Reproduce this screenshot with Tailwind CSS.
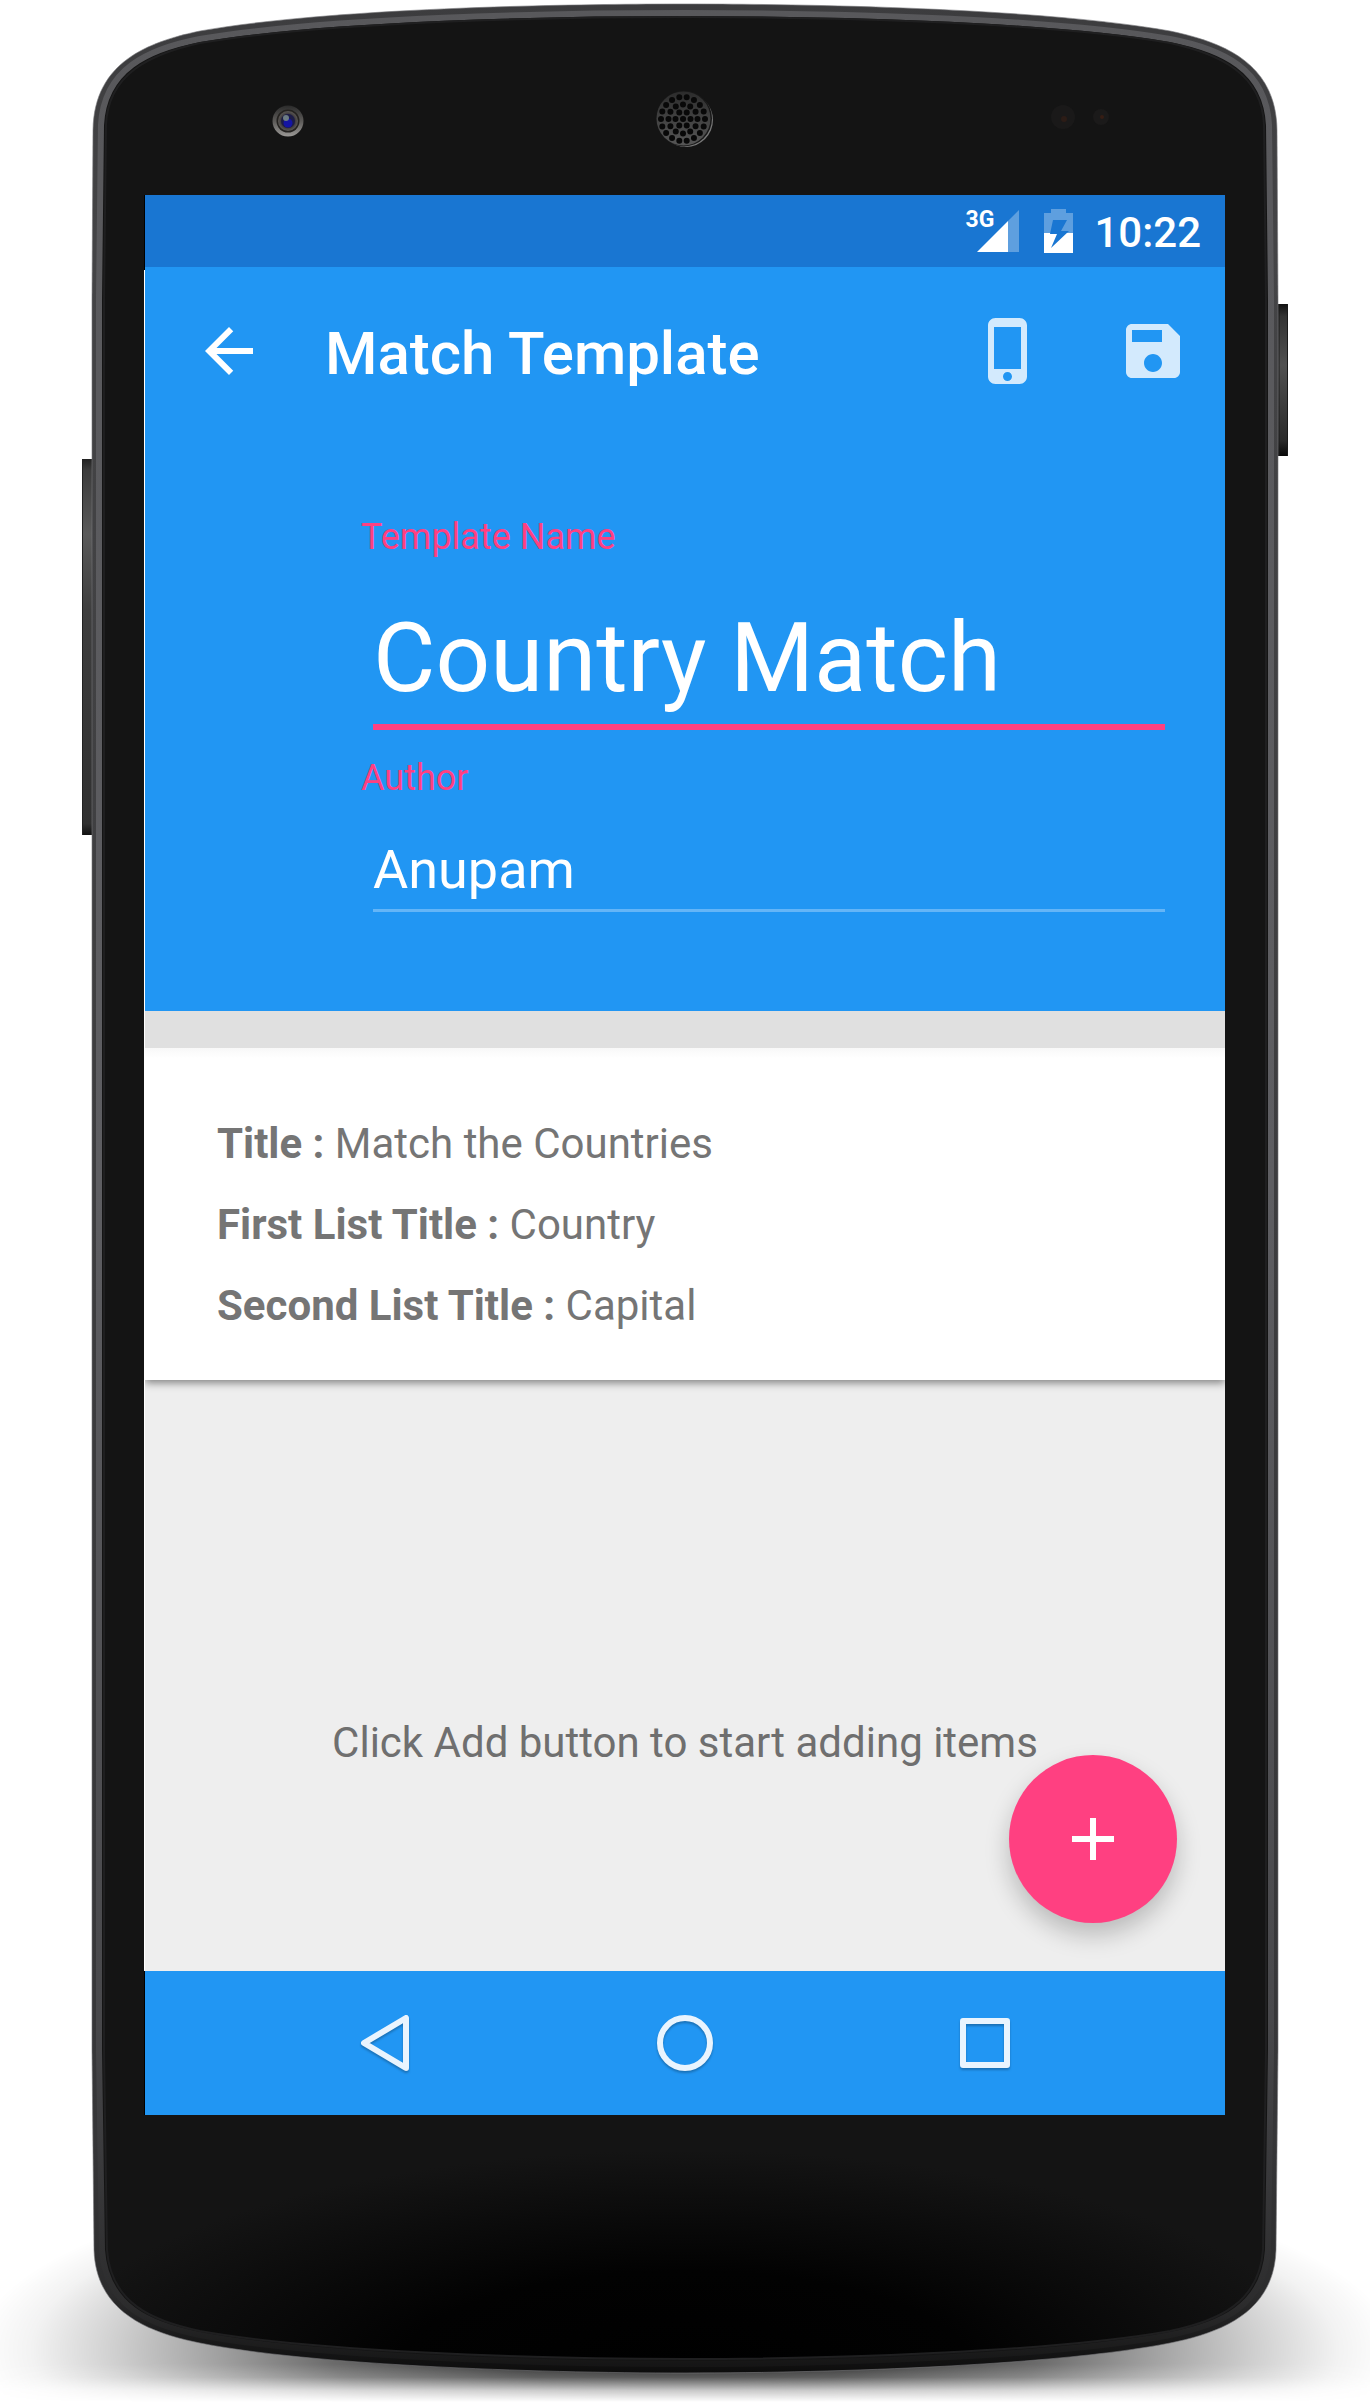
<!DOCTYPE html>
<html lang="en">
<head>
<meta charset="utf-8">
<meta name="viewport" content="width=device-width, initial-scale=1">
<title>Match Template</title>
<script src="https://cdn.jsdelivr.net/npm/@tailwindcss/browser@4"></script>
</head>
<body class="bg-white font-['Roboto',sans-serif]">
<div class="relative mx-auto w-full max-w-[1370px] px-[145px] pt-[195px] pb-[290px]">

  <!-- Device body -->
  <svg class="absolute inset-0 h-full w-full" viewBox="0 0 1370 2405" preserveAspectRatio="none" aria-hidden="true">
    <defs>
      <radialGradient id="ground" gradientUnits="userSpaceOnUse" cx="0" cy="0" r="1" gradientTransform="translate(685 2350) scale(710 200)">
        <stop offset="0" stop-color="#000" stop-opacity=".85"/>
        <stop offset=".25" stop-color="#000" stop-opacity=".78"/>
        <stop offset=".5" stop-color="#000" stop-opacity=".58"/>
        <stop offset=".65" stop-color="#000" stop-opacity=".38"/>
        <stop offset=".8" stop-color="#000" stop-opacity=".19"/>
        <stop offset=".92" stop-color="#000" stop-opacity=".05"/>
        <stop offset="1" stop-color="#000" stop-opacity="0"/>
      </radialGradient>
      <linearGradient id="fade" gradientUnits="userSpaceOnUse" x1="0" y1="2364" x2="0" y2="2402">
        <stop offset="0" stop-color="#fff"/>
        <stop offset=".35" stop-color="#ccc"/>
        <stop offset=".7" stop-color="#444"/>
        <stop offset="1" stop-color="#000"/>
      </linearGradient>
      <mask id="floor" maskUnits="userSpaceOnUse" x="0" y="2100" width="1370" height="305">
        <rect x="0" y="2100" width="1370" height="305" fill="url(#fade)"/>
      </mask>
      <linearGradient id="rim" gradientUnits="userSpaceOnUse" x1="0" y1="0" x2="0" y2="2375">
        <stop offset="0" stop-color="#3c3c3e"/>
        <stop offset=".1" stop-color="#444446"/>
        <stop offset=".9" stop-color="#363638"/>
        <stop offset=".965" stop-color="#2c2c2d"/>
        <stop offset="1" stop-color="#0c0c0c"/>
      </linearGradient>
      <linearGradient id="edge" gradientUnits="userSpaceOnUse" x1="0" y1="0" x2="0" y2="2375">
        <stop offset="0" stop-color="#58585b"/>
        <stop offset=".5" stop-color="#5e5e62"/>
        <stop offset=".85" stop-color="#48484b"/>
        <stop offset=".97" stop-color="#2c2c2d"/>
        <stop offset="1" stop-color="#121212"/>
      </linearGradient>
      <radialGradient id="glass" gradientUnits="userSpaceOnUse" cx="0" cy="0" r="1" gradientTransform="translate(685 2370) scale(640 220)">
        <stop offset="0" stop-color="#000"/>
        <stop offset=".45" stop-color="#020202"/>
        <stop offset="1" stop-color="#141414"/>
      </radialGradient>
      <linearGradient id="key" x1="0" y1="0" x2="0" y2="1">
        <stop offset="0" stop-color="#222"/>
        <stop offset=".03" stop-color="#3c3c3c"/>
        <stop offset=".2" stop-color="#5a5a5a"/>
        <stop offset=".4" stop-color="#3e3e3e"/>
        <stop offset=".97" stop-color="#303030"/>
        <stop offset="1" stop-color="#111"/>
      </linearGradient>
      <linearGradient id="power" x1="0" y1="0" x2="0" y2="1">
        <stop offset="0" stop-color="#111"/>
        <stop offset=".08" stop-color="#333"/>
        <stop offset=".4" stop-color="#505050"/>
        <stop offset=".9" stop-color="#2a2a2a"/>
        <stop offset="1" stop-color="#080808"/>
      </linearGradient>
      <linearGradient id="lens" x1="0" y1="0" x2="0" y2="1">
        <stop offset="0" stop-color="#2b2b2b"/>
        <stop offset=".5" stop-color="#5c5a58"/>
        <stop offset="1" stop-color="#9a9896"/>
      </linearGradient>
      <radialGradient id="well">
        <stop offset="0" stop-color="#12125a"/>
        <stop offset=".5" stop-color="#2a2830"/>
        <stop offset="1" stop-color="#5c5854"/>
      </radialGradient>
      <linearGradient id="grille" x1="0" y1="0" x2="0" y2="1">
        <stop offset="0" stop-color="#2c2c2c"/>
        <stop offset="1" stop-color="#565656"/>
      </linearGradient>
    </defs>

    <rect x="0" y="2100" width="1370" height="305" fill="url(#ground)" mask="url(#floor)"/>

    <rect x="82" y="459" width="14" height="376" fill="url(#key)"/>
    <path d="M82.500 459V835" stroke="#222"/>
    <rect x="1274" y="304" width="14" height="152" fill="url(#power)"/>
    <path d="M1287.500 304V456M1279 304V456" stroke="#1a1a1a"/>

    <path fill="url(#rim)" stroke="#77777a" stroke-width=".6" d="M92 300L93 130C94 62 148 42 200 31C330 8 560 4 685 4C810 4 1040 8 1170 31C1222 42 1276 62 1277 130L1278 300V2050L1276 2250C1274 2310 1225 2332 1170 2343C1060 2365 840 2373 685 2373C530 2373 310 2365 200 2343C145 2332 96 2310 94 2250L92 2050Z"/>
    <path fill="#141414" stroke="url(#edge)" stroke-width="6" d="M99 300L101 125C104 69 148 49 200 39C330 17 560 13 685 13C810 13 1040 17 1170 39C1222 49 1266 69 1269 125L1271 300V2050L1268 2250C1264 2307 1220 2325 1170 2335C1060 2356 840 2364 685 2364C530 2364 310 2356 200 2335C150 2325 106 2307 102 2250L99 2050Z"/>
    <path fill="url(#glass)" stroke="#1f1f20" stroke-width="2" d="M104 300L106 125C108 74 150 54 200 43C330 21 560 17 685 17C810 17 1040 21 1170 43C1220 54 1262 74 1264 125L1266 300V2050L1263 2250C1259 2303 1218 2321 1170 2331C1060 2351 840 2359 685 2359C530 2359 310 2351 200 2331C152 2321 111 2303 107 2250L104 2050Z"/>

    <path d="M144.500 195V270M144.500 1971V2115" stroke="#000"/>
    <path d="M144.500 270V1971" stroke="#fff"/>

    <!-- Camera -->
    <circle cx="288" cy="121" r="15.500" fill="url(#lens)"/>
    <circle cx="288" cy="121" r="11.500" fill="#242220"/>
    <circle cx="288" cy="121" r="10" fill="url(#well)"/>
    <circle cx="288" cy="121" r="7" fill="#1c1c48"/>
    <circle cx="288" cy="123" r="4.500" fill="#1414a4"/>
    <circle cx="286" cy="118" r="3" fill="#6c7c84"/>

    <!-- Earpiece -->
    <circle cx="686" cy="120" r="27" fill="#777"/>
    <circle cx="684" cy="118.500" r="28" fill="#181818"/>
    <circle cx="683.500" cy="118.500" r="27" fill="url(#grille)"/>
    <g fill="none" stroke="#080808" stroke-width="6" stroke-linecap="round">
      <circle cx="683" cy="119" r="7.500" pathLength="60" stroke-dasharray="0 10"/>
      <circle cx="683" cy="119" r="14.500" pathLength="120" stroke-dasharray="0 10"/>
      <circle cx="683" cy="119" r="22" pathLength="180" stroke-dasharray="0 10"/>
      <path d="M683 119h.1"/>
    </g>

    <!-- Proximity sensors -->
    <circle cx="1063" cy="117" r="12" fill="#1a1919"/>
    <circle cx="1064" cy="119" r="3" fill="#2c1c16"/>
    <circle cx="1101" cy="117" r="8" fill="#1b1a1a"/>
    <circle cx="1102" cy="117" r="2" fill="#361d14"/>
  </svg>

  <!-- Screen -->
  <div class="relative flex flex-col bg-[#eeeeee]">
    <div class="flex h-[72px] items-center justify-end bg-[#1976d2] pr-6 text-white">
      <div class="relative mr-[25px] h-[42px] w-[54px]">
        <span class="absolute top-0 left-0 text-[23px] leading-5 font-bold">3G</span>
        <svg class="absolute right-0 bottom-0 h-[42px] w-[42px]" viewBox="0 0 42 42" aria-label="Signal">
          <path d="M42 0V42H31V11Z" fill="#fff" opacity=".3"/>
          <path d="M31 11V42H0Z" fill="#fff"/>
        </svg>
      </div>
      <svg class="mr-[21px] h-11 w-[29px]" viewBox="0 0 29 44" aria-label="Battery charging">
        <path d="M7 0H22V4H29V24H0V4H7Z" fill="#fff" opacity=".3"/>
        <path d="M0 24H29V44H0Z" fill="#fff"/>
        <path d="M9 11H23L17 22H25L7 39L13 25H6Z" fill="#1976d2"/>
      </svg>
      <time class="pt-1 text-[42px] leading-[50px] font-medium">10:22</time>
    </div>

    <header class="bg-[#2196f3] text-white">
      <div class="flex h-[168px] items-center pr-9 pl-12">
        <button type="button" aria-label="Back">
          <svg class="h-[72px] w-[72px]" viewBox="0 0 24 24" fill="currentColor"><path d="M20 11H7.830l5.590-5.590L12 4l-8 8 8 8 1.410-1.410L7.830 13H20v-2z"/></svg>
        </button>
        <h1 class="ml-[60px] flex-1 pt-1.5 text-[60px] leading-[70px] font-medium">Match Template</h1>
        <div class="flex gap-[72px] text-white/80">
          <button type="button" aria-label="Preview">
            <svg class="h-[72px] w-[72px]" viewBox="0 0 24 24" fill="currentColor"><path d="M15.500 1h-8C6.120 1 5 2.120 5 3.500v17C5 21.880 6.120 23 7.500 23h8c1.380 0 2.500-1.120 2.500-2.500v-17C18 2.120 16.880 1 15.500 1zm-4 21c-.83 0-1.500-.67-1.500-1.500s.67-1.500 1.500-1.500 1.500.67 1.500 1.500-.67 1.500-1.500 1.500zm4.500-4H7V4h9v14z"/></svg>
          </button>
          <button type="button" aria-label="Save">
            <svg class="h-[72px] w-[72px]" viewBox="0 0 24 24" fill="currentColor"><path d="M17 3H5c-1.110 0-2 .9-2 2v14c0 1.100.89 2 2 2h14c1.100 0 2-.9 2-2V7l-4-4zm-5 16c-1.660 0-3-1.340-3-3s1.340-3 3-3 3 1.340 3 3-1.340 3-3 3zm3-10H5V5h10v4z"/></svg>
          </button>
        </div>
      </div>

      <form class="flex flex-col pt-[81px] pr-[60px] pb-[99px] pl-[216px]">
        <label for="template-name" class="text-[36px] leading-[42px] text-[#ff4081]">Template Name</label>
        <div class="mt-11 ml-3 flex border-b-[6px] border-[#ff4081] pb-[10px]">
          <input id="template-name" type="text" value="Country Match" class="h-28 w-full bg-transparent text-[96px] leading-[112px] outline-none">
        </div>
        <label for="author" class="mt-[27px] text-[36px] leading-[42px] text-[#ff4081]">Author</label>
        <div class="mt-[39px] ml-3 flex border-b-[3px] border-[#64b5f7] pb-[7px]">
          <input id="author" type="text" value="Anupam" class="h-16 w-full bg-transparent text-[54px] leading-[64px] outline-none">
        </div>
      </form>
    </header>

    <main class="relative">
      <div class="h-[37px] bg-[#e0e0e0]"></div>
      <section class="relative overflow-hidden">
        <div class="bg-white bg-linear-to-b from-[#f8f8f8] to-white to-[10px] px-[72px] pt-[71px] pb-[50px] text-[42px] leading-[49px] text-[#757575] shadow-[0_3px_8px_rgba(0,0,0,0.45)]">
          <dl class="flex flex-col gap-8">
            <div><dt class="inline font-bold">Title :</dt> <dd class="inline">Match the Countries</dd></div>
            <div><dt class="inline font-bold">First List Title :</dt> <dd class="inline">Country</dd></div>
            <div><dt class="inline font-bold">Second List Title :</dt> <dd class="inline">Capital</dd></div>
          </dl>
        </div>
        <p class="pt-[338px] pb-[204px] text-center text-[42px] leading-[49px] text-[#6f6f6f]">Click Add button to start adding items</p>
      </section>
      <button type="button" aria-label="Add" class="absolute right-12 bottom-12 flex h-[168px] w-[168px] items-center justify-center rounded-full bg-[#ff4081] text-white shadow-[0_12px_24px_rgba(0,0,0,0.22)]">
        <svg class="h-[72px] w-[72px]" viewBox="0 0 24 24" fill="currentColor"><path d="M19 13h-6v6h-2v-6H5v-2h6V5h2v6h6v2z"/></svg>
      </button>
    </main>

    <nav class="flex h-36 items-center justify-center gap-[228px] bg-[#2196f3]">
      <button type="button" aria-label="Back">
        <svg class="h-[72px] w-[72px] drop-shadow-[0_2px_1px_rgba(0,0,0,0.25)]" viewBox="0 0 72 72" fill="none" stroke="#e9f4fe" stroke-width="6" stroke-linejoin="round"><path d="M57 11V61L15 36Z"/></svg>
      </button>
      <button type="button" aria-label="Home">
        <svg class="h-[72px] w-[72px] drop-shadow-[0_2px_1px_rgba(0,0,0,0.25)]" viewBox="0 0 72 72" fill="none" stroke="#e9f4fe" stroke-width="6"><circle cx="36" cy="36" r="25"/></svg>
      </button>
      <button type="button" aria-label="Recent apps">
        <svg class="h-[72px] w-[72px] drop-shadow-[0_2px_1px_rgba(0,0,0,0.25)]" viewBox="0 0 72 72" fill="none" stroke="#e9f4fe" stroke-width="6" stroke-linejoin="round"><rect x="14" y="14" width="44" height="44"/></svg>
      </button>
    </nav>
  </div>
</div>
</body>
</html>
